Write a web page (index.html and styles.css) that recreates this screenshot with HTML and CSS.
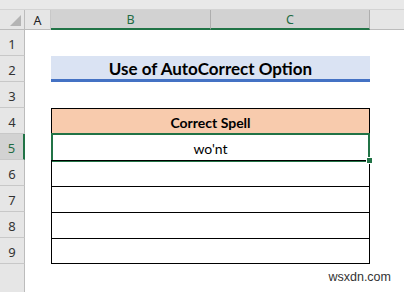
FILE: index.html
```html
<!DOCTYPE html>
<html>
<head>
<meta charset="utf-8">
<link rel="stylesheet" href="styles.css">
</head>
<body>
<div class="sheet">
  <div class="topstrip"></div>
  <div class="corner"><span class="tri"></span></div>
  <div class="colhead">A</div>
  <div class="colhead sel">B</div>
  <div class="colhead sel">C</div>
  <div class="colhead rest"></div>

  <div class="rowhead">1</div><div class="cell full"></div>
  <div class="rowhead">2</div><div class="cell a"></div><div class="title">Use of AutoCorrect Option</div><div class="cell"></div>
  <div class="rowhead">3</div><div class="cell full"></div>
  <div class="rowhead">4</div><div class="cell a"></div><div class="tcell thead">Correct Spell</div><div class="cell"></div>
  <div class="rowhead sel">5</div><div class="cell a"></div><div class="tcell active">wo'nt</div><div class="cell"></div>
  <div class="rowhead">6</div><div class="cell a"></div><div class="tcell"></div><div class="cell"></div>
  <div class="rowhead">7</div><div class="cell a"></div><div class="tcell"></div><div class="cell"></div>
  <div class="rowhead">8</div><div class="cell a"></div><div class="tcell"></div><div class="cell"></div>
  <div class="rowhead">9</div><div class="cell a"></div><div class="tcell last"></div><div class="cell"></div>
  <div class="rowhead end"></div><div class="cell full foot"><span class="mark">wsxdn.com</span></div>
</div>
</body>
</html>
```
FILE: styles.css
```css
html, body { margin: 0; padding: 0; background: #fff; }
.sheet {
  width: 404px; height: 292px; overflow: hidden;
  display: grid;
  grid-template-columns: 25px 26px 160px 159px 34px;
  grid-template-rows: 10px 20px repeat(9, 26px) 28px;
  font-family: "Noto Sans", "Liberation Sans", sans-serif;
}
.topstrip { grid-column: 1 / -1; background: #e9e9e9; border-bottom: 1px solid #d4d4d4; box-sizing: border-box; }
.corner { position: relative; background: #e6e6e6; border-right: 1px solid #bcbcbc; border-bottom: 1px solid #bcbcbc; box-sizing: border-box; }
.tri { position: absolute; right: 3px; bottom: 3px; width: 0; height: 0; border-left: 11px solid transparent; border-bottom: 11px solid #b4b4b4; }
.colhead {
  background: #e6e6e6; border-right: 1px solid #c8c8c8; border-bottom: 1px solid #bcbcbc;
  box-sizing: border-box; font-size: 12.5px; color: #222; display: flex; align-items: center; justify-content: center; padding-top: 1px;
}
.colhead.sel { background: #d2d2d2; color: #1f6b43; border-bottom: 2px solid #217346; border-right-color: #aeaeae; }
.colhead.rest { border-right: none; }
.rowhead {
  grid-column: 1; background: #e6e6e6; border-right: 1px solid #bcbcbc; border-bottom: 1px solid #c8c8c8;
  box-sizing: border-box; font-size: 13px; color: #333; display: flex; align-items: center; justify-content: center; padding-top: 2px;
}
.rowhead.sel { background: #d2d2d2; color: #1f6b43; border-right: 2px solid #217346; }
.rowhead.end { border-bottom: none; }
.cell { background: #fff; }
.cell.full { grid-column: 2 / -1; }
.title {
  grid-column: 3 / 5; background: #dae3f3; border-bottom: 3px solid #4472c4; box-sizing: border-box;
  font-family: Lato, "Liberation Sans", sans-serif; font-weight: 700; font-size: 17px; color: #000;
  display: flex; align-items: center; justify-content: center; padding-top: 2px;
}
.tcell {
  grid-column: 3 / 5; border: 1px solid #000; border-bottom: none; box-sizing: border-box; position: relative;
  font-family: Lato, "Liberation Sans", sans-serif; font-size: 14px; color: #000;
  display: flex; align-items: center; justify-content: center; padding-top: 1px;
}
.tcell.last { border-bottom: 1px solid #000; }
.thead { background: #f8cbad; font-weight: 700; }
.active::after {
  content: ""; position: absolute; left: -1px; top: -2px; right: -1px; bottom: -2px;
  border: 2px solid #217346; pointer-events: none;
}
.active::before {
  content: ""; position: absolute; right: -4px; bottom: -4px; width: 5px; height: 5px;
  background: #217346; border: 1px solid #fff; z-index: 2;
}
.foot { position: relative; }
.mark {
  position: absolute; right: 13px; top: 6px;
  font-family: "Liberation Sans", Arial, sans-serif; font-size: 12.5px; color: #333;
}
```
